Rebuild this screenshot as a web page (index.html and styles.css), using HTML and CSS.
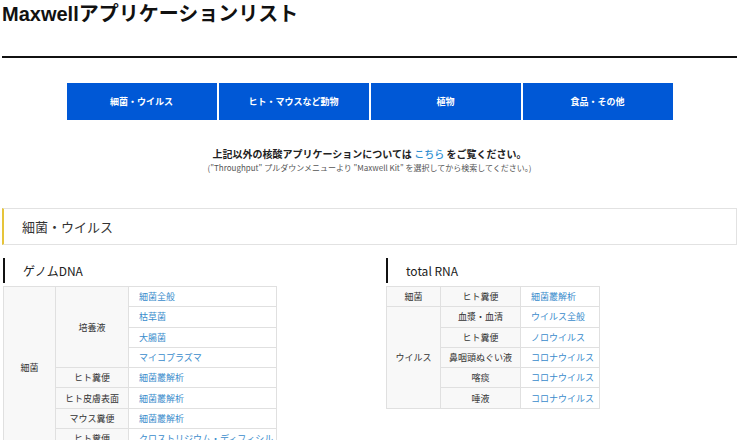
FILE: index.html
```html
<!DOCTYPE html>
<html lang="ja">
<head>
    <meta charset="UTF-8">
    <meta name="viewport" content="width=device-width, initial-scale=1.0">
    <title>Maxwellアプリケーションリスト</title>
    <link rel="stylesheet" href="styles.css">
</head>
<body>
    <div class="page">
        <h1 class="page-title">Maxwellアプリケーションリスト</h1>

        <div class="nav">
            <a class="nav-btn" href="#bacteria">細菌・ウイルス</a>
            <a class="nav-btn" href="#animal">ヒト・マウスなど動物</a>
            <a class="nav-btn" href="#plant">植物</a>
            <a class="nav-btn" href="#food">食品・その他</a>
        </div>

        <div class="notice">
            <p class="notice-main">上記以外の核酸アプリケーションについては <a href="#">こちら</a> をご覧ください。</p>
            <p class="notice-sub">("Throughput" プルダウンメニューより "Maxwell Kit" を選択してから検索してください。)</p>
        </div>

        <h2 class="section-title" id="bacteria">細菌・ウイルス</h2>

        <div class="columns">
            <div class="col">
                <h3 class="sub-title">ゲノムDNA</h3>
                <table class="app-table dna">
                    <tr>
                        <td rowspan="8">細菌</td>
                        <td rowspan="4">培養液</td>
                        <td><a href="#">細菌全般</a></td>
                    </tr>
                    <tr><td><a href="#">枯草菌</a></td></tr>
                    <tr><td><a href="#">大腸菌</a></td></tr>
                    <tr><td><a href="#">マイコプラズマ</a></td></tr>
                    <tr><td>ヒト糞便</td><td><a href="#">細菌叢解析</a></td></tr>
                    <tr><td>ヒト皮膚表面</td><td><a href="#">細菌叢解析</a></td></tr>
                    <tr><td>マウス糞便</td><td><a href="#">細菌叢解析</a></td></tr>
                    <tr><td>ヒト糞便</td><td><a href="#">クロストリジウム・ディフィシル</a></td></tr>
                </table>
            </div>

            <div class="col">
                <h3 class="sub-title">total RNA</h3>
                <table class="app-table rna">
                    <tr>
                        <td>細菌</td>
                        <td>ヒト糞便</td>
                        <td><a href="#">細菌叢解析</a></td>
                    </tr>
                    <tr>
                        <td rowspan="6">ウイルス</td>
                        <td>血漿・血清</td>
                        <td><a href="#">ウイルス全般</a></td>
                    </tr>
                    <tr><td>ヒト糞便</td><td><a href="#">ノロウイルス</a></td></tr>
                    <tr><td>鼻咽頭ぬぐい液</td><td><a href="#">コロナウイルス</a></td></tr>
                    <tr><td>喀痰</td><td><a href="#">コロナウイルス</a></td></tr>
                    <tr><td>唾液</td><td><a href="#">コロナウイルス</a></td></tr>
                </table>
            </div>
        </div>
    </div>
</body>
</html>
```

FILE: styles.css
```css
* {
    margin: 0;
    padding: 0;
    box-sizing: border-box;
}

body {
    font-family: "Noto Sans CJK JP", "Noto Sans", sans-serif;
    color: #333;
    background: white;
}

a {
    text-decoration: none;
}

.page {
    width: 740px;
    padding: 0 3px 0 2px;
}

.page-title {
    font-family: "Liberation Sans", "Noto Sans CJK JP", sans-serif;
    font-size: 20px;
    font-weight: 700;
    color: #111;
    line-height: 28px;
    padding-bottom: 28px;
    border-bottom: 2px solid #111;
}

.nav {
    display: flex;
    justify-content: center;
    gap: 2px;
    margin-top: 25px;
}

.nav-btn {
    width: 150px;
    height: 37px;
    display: flex;
    align-items: center;
    justify-content: center;
    background: #0058d6;
    color: white;
    font-size: 9px;
    font-weight: 700;
}

.notice {
    text-align: center;
    margin-top: 26px;
}

.notice-main {
    font-size: 10px;
    font-weight: 700;
    color: #222;
    line-height: 16px;
}

.notice-main a {
    color: #2f8fd1;
    font-weight: 500;
}

.notice-sub {
    font-size: 8px;
    color: #555;
    line-height: 12px;
}

.section-title {
    margin-top: 34px;
    height: 37px;
    display: flex;
    align-items: center;
    padding-left: 18px;
    font-size: 13px;
    font-weight: 400;
    color: #333;
    border: 1px solid #e2e2e2;
    border-left: 2px solid #e6c43a;
}

.columns {
    display: grid;
    grid-template-columns: 383px 1fr;
    margin-top: 13px;
    padding-left: 1px;
}

.sub-title {
    height: 25px;
    display: flex;
    align-items: center;
    padding-left: 18px;
    font-size: 12px;
    font-weight: 400;
    color: #222;
    border-left: 2px solid #111;
    margin-bottom: 3px;
}

.app-table {
    border-collapse: collapse;
    table-layout: fixed;
    font-size: 9px;
    color: #333;
}

.app-table td {
    border: 1px solid #e0e0e0;
    height: 20.3px;
    padding: 0 4px;
    text-align: center;
    white-space: nowrap;
    background: #f8f8f8;
}

.app-table td:last-child {
    text-align: left;
    padding-left: 10px;
    background: white;
}

.app-table td[rowspan] {
    background: #f8f8f8;
    text-align: center;
    padding-left: 4px;
}

.app-table a {
    color: #3a8ccc;
}

.dna {
    width: 274px;
}

.dna tr:first-child td:nth-child(1) {
    width: 52px;
}

.dna tr:first-child td:nth-child(2) {
    width: 73px;
}

.rna {
    width: 214px;
}

.rna tr:first-child td:nth-child(1) {
    width: 54px;
}

.rna tr:first-child td:nth-child(2) {
    width: 80px;
}
```
